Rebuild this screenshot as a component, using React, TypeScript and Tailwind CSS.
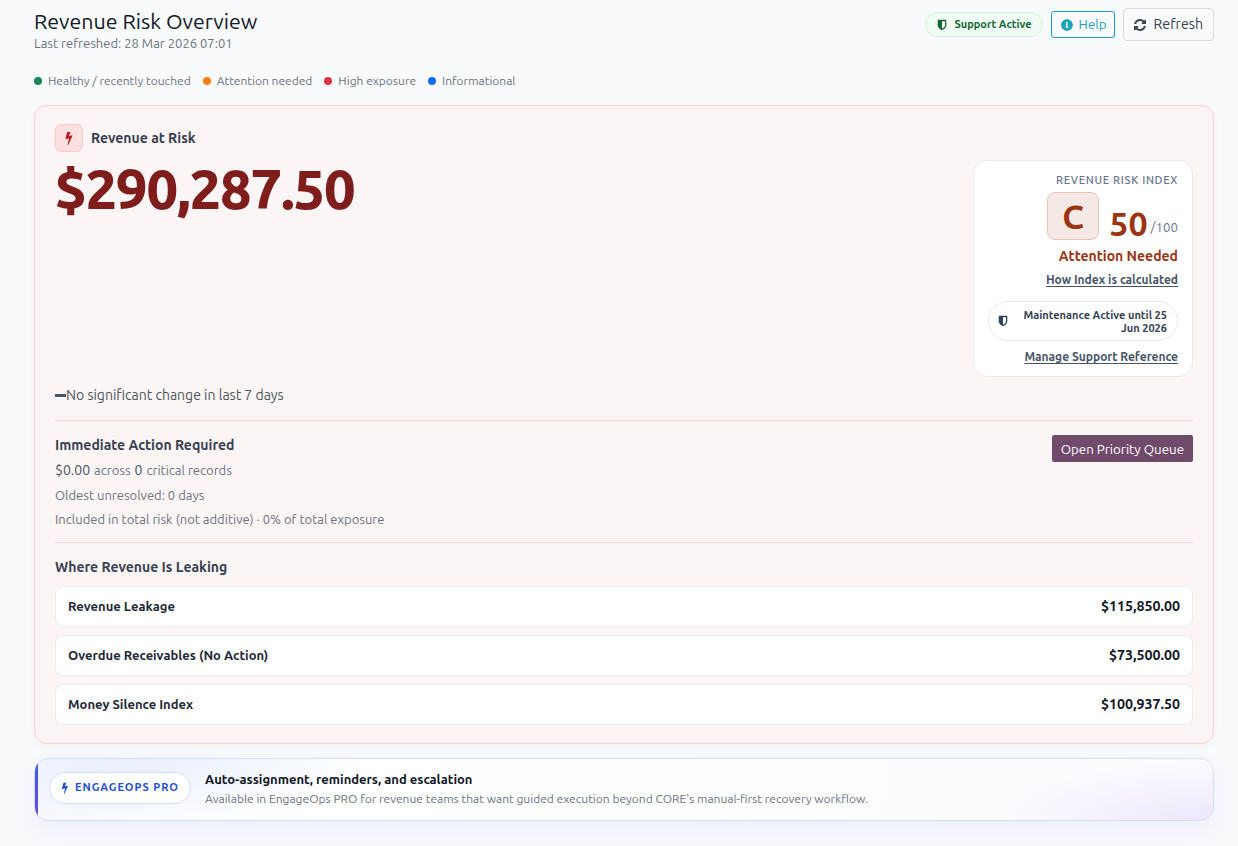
import { FaInfoCircle } from "react-icons/fa"

const legend = [
  { label: "Healthy / recently touched", dot: "bg-[#198754]" },
  { label: "Attention needed", dot: "bg-[#fd7e14]" },
  { label: "High exposure", dot: "bg-[#dc3545]" },
  { label: "Informational", dot: "bg-[#0d6efd]" },
]

const leaks = [
  { label: "Revenue Leakage", amount: "$115,850.00" },
  { label: "Overdue Receivables (No Action)", amount: "$73,500.00" },
  { label: "Money Silence Index", amount: "$100,937.50" },
]

function BoltIcon({ className }: { className: string }) {
  return (
    <svg viewBox="0 0 1792 1792" fill="currentColor" className={className}>
      <path d="M1333 566q18 20 7 44l-540 1157q-13 25-42 25-4 0-14-2-17-5-25.500-19t-4.500-30l197-808-406 101q-4 1-12 1-18 0-31-11-18-15-13-39l201-825q4-14 16-23t28-9h328q19 0 32 12.500t13 29.500q0 8-5 18l-171 463 396-98q8-2 12-2 19 0 34 15z" />
    </svg>
  )
}

function ShieldIcon({ className }: { className: string }) {
  return (
    <svg viewBox="0 0 1792 1792" fill="currentColor" className={className}>
      <path d="M1344 960v-640h-448v1137q119-63 213-137 235-184 235-360zm192-768v768q0 86-33.500 170.500t-83 150-118 127.500-126.500 103-121 77.500-89.500 49.500-42.500 20q-12 6-26 6t-26-6q-16-7-42.500-20t-89.500-49.500-121-77.500-126.500-103-118-127.500-83-150-33.500-170.500v-768q0-26 19-45t45-19h1152q26 0 45 19t19 45z" />
    </svg>
  )
}

function RefreshIcon({ className }: { className: string }) {
  return (
    <svg viewBox="0 0 1792 1792" fill="currentColor" className={className}>
      <path d="M1639 1056q0 5-1 7-64 268-268 434.500t-478 166.500q-146 0-282.500-55t-243.500-157l-129 129q-19 19-45 19t-45-19-19-45v-448q0-26 19-45t45-19h448q26 0 45 19t19 45-19 45l-137 137q71 66 161 102t187 36q134 0 250-65t186-179q11-17 53-117 8-23 30-23h192q13 0 22.500 9.500t9.500 22.500zm25-800v448q0 26-19 45t-45 19h-448q-26 0-45-19t-19-45 19-45l138-138q-148-137-349-137-134 0-250 65t-186 179q-11 17-53 117-8 23-30 23h-199q-13 0-22.500-9.500t-9.500-22.500v-7q65-268 270-434.500t480-166.500q146 0 284 55.500t245 156.500l130-129q19-19 45-19t45 19 19 45z" />
    </svg>
  )
}

function RiskIndexCard() {
  return (
    <div className="flex h-[217px] w-[220px] shrink-0 flex-col items-end rounded-[14px] border border-[#e9e9ee] bg-white px-[14px] pt-[12px] text-right">
      <div className="text-[11px] font-medium leading-[14px] tracking-[0.7px] text-[#64748b]">REVENUE RISK INDEX</div>
      <div className="mt-[5px] flex items-end">
        <div className="flex h-[48px] w-[52px] items-center justify-center rounded-[8px] border border-[#e8c4b8] bg-[#f5e9e6] text-[34px] font-bold text-[#9a3412]">C</div>
        <div className="ml-[10px] text-[34px] font-bold leading-[34px] text-[#9a3412]">50</div>
        <div className="mb-[2px] ml-[3px] text-[13.3px] leading-[20px] text-[#64748b]">/100</div>
      </div>
      <div className="mt-[6px] text-[14px] font-bold leading-[20px] text-[#9a3412]">Attention Needed</div>
      <a className="mt-[6px] text-[12px] font-bold leading-[16px] text-[#475569] underline underline-offset-2">How Index is calculated</a>
      <div className="mt-[13px] flex h-[40px] w-[190px] items-center justify-between rounded-full border border-[#e9e9ee] bg-white pl-[8px] pr-[10px]">
        <ShieldIcon className="h-[12px] w-[12px] text-[#334155]" />
        <div className="w-[150px] pt-[1px] text-[11px] font-bold leading-[13px] text-[#334155]">Maintenance Active until 25 Jun 2026</div>
      </div>
      <a className="mt-[8px] text-[12px] font-bold leading-[16px] text-[#475569] underline underline-offset-2">Manage Support Reference</a>
    </div>
  )
}

export default function App() {
  return (
    <div className="min-h-[846px] bg-[#f9fafc] pb-[25px] pl-[34px] pr-[24px] pt-[8px] font-['Ubuntu','Noto_Sans',sans-serif]">
      <div className="flex items-start justify-between">
        <div>
          <h1 className="text-[21.4px] font-normal leading-[26px] text-[#111827]">Revenue Risk Overview</h1>
          <div className="mt-[1px] text-[13px] leading-[16px] text-[#6b7280]">Last refreshed: 28 Mar 2026 07:01</div>
        </div>
        <div className="flex items-center">
          <div className="flex h-[25px] items-center gap-[6px] rounded-full border border-[#d1f0dc] bg-[#f0fdf4] pl-[10px] pr-[10px] text-[11px] font-bold text-[#166534]">
            <ShieldIcon className="h-[12px] w-[12px]" />
            Support Active
          </div>
          <button className="ml-[8px] flex h-[27px] items-center gap-[6px] rounded-[3px] border border-[#17a2b8] pl-[9px] pr-[8px] pt-[1px] text-[13.3px] text-[#17a2b8]">
            <FaInfoCircle className="h-[12px] w-[12px]" />
            Help
          </button>
          <button className="ml-[8px] flex h-[33px] items-center gap-[6px] rounded-[4px] border border-[#d8dae0] pl-[9px] pr-[10px] pt-[1px] text-[14.2px] text-[#374151]">
            <RefreshIcon className="h-[14px] w-[14px]" />
            Refresh
          </button>
        </div>
      </div>

      <div className="mt-[22px] flex items-center gap-[12px] text-[12px] leading-[16px] text-[#6b7280]">
        {legend.map((item) => (
          <div key={item.label} className="flex items-center gap-[6px]">
            <span className={`mb-[1px] h-[8px] w-[8px] rounded-full ${item.dot}`} />
            {item.label}
          </div>
        ))}
      </div>

      <div className="mt-[16px] rounded-[12px] border border-[#fbd0d0] bg-[#fcf5f5] px-[20px] pb-[18px] pt-[18px] shadow-[0_2px_8px_rgba(0,0,0,0.03)]">
        <div className="flex items-center gap-[8px]">
          <div className="flex h-[28px] w-[28px] items-center justify-center rounded-[6px] border border-[#fbc9c9] bg-[#fce0e0]">
            <BoltIcon className="h-[14px] w-[14px] text-[#b91c1c]" />
          </div>
          <div className="text-[14px] font-bold text-[#374151]">Revenue at Risk</div>
        </div>

        <div className="flex items-start justify-between">
          <div className="mt-[5px] text-[56px] font-extrabold leading-[64px] tracking-[-1.12px] text-[#7f1d1d]">$290,287.50</div>
          <div className="mt-[8px]">
            <RiskIndexCard />
          </div>
        </div>

        <div className="mt-[8px] flex items-center text-[14px] leading-[20px] text-[#4b5563]">
          <span className="h-[3px] w-[11px] bg-[#475569]" />
          No significant change in last 7 days
        </div>

        <div className="mt-[15px] flex items-start justify-between border-t border-[#fbd5d5] pb-[15px] pt-[14px]">
          <div>
            <div className="text-[14px] font-bold leading-[20px] text-[#374151]">Immediate Action Required</div>
            <div className="mt-[6px] flex items-baseline gap-[4px] text-[13px] leading-[18px] text-[#6b7280]">
              <span className="text-[14px] text-[#4b5563]">$0.00</span> across <span className="text-[14px] text-[#4b5563]">0</span> critical records
            </div>
            <div className="mt-[8px] text-[13px] leading-[16px] text-[#6b7280]">Oldest unresolved: 0 days</div>
            <div className="mt-[8px] text-[13px] leading-[16px] text-[#6b7280]">Included in total risk (not additive) · 0% of total exposure</div>
          </div>
          <button className="h-[27px] rounded-[2px] bg-[#6f4a6b] px-[9px] pt-[3px] text-[13.3px] text-white">Open Priority Queue</button>
        </div>

        <div className="border-t border-[#fbd5d5] pt-[14px]">
          <div className="text-[14px] font-bold leading-[20px] text-[#374151]">Where Revenue Is Leaking</div>
          <div className="mt-[9px] flex flex-col gap-[8px]">
            {leaks.map((row) => (
              <div key={row.label} className="flex h-[41px] items-center justify-between rounded-[8px] border border-[#eeeef2] bg-white px-[12px]">
                <span className="text-[13px] font-bold text-[#1f2937]">{row.label}</span>
                <span className="text-[14.2px] font-bold text-[#111827]">{row.amount}</span>
              </div>
            ))}
          </div>
        </div>
      </div>

      <div className="relative mt-[14px] flex h-[63px] items-center overflow-hidden rounded-[14px] border border-[#d3defc] bg-[radial-gradient(ellipse_220px_60px_at_100%_100%,#ede7fb_0%,rgba(255,255,255,0)_100%),radial-gradient(ellipse_240px_60px_at_8%_0%,#eaeffd_0%,rgba(255,255,255,0)_100%),linear-gradient(100deg,#f6f8fe_0%,#ffffff_25%,#fbfbfe_100%)] pb-[4px] pl-[14px] shadow-[0_10px_24px_rgba(79,100,229,0.07)]">
        <span className="absolute bottom-0 left-0 top-0 w-[3px] bg-[linear-gradient(180deg,#3b5bdb,#7048e8)]" />
        <div className="flex h-[32px] w-[142px] items-center gap-[4px] rounded-full border border-[#d3defc] bg-white pl-[9px] text-[11px] font-bold tracking-[1px] text-[#1d4ed8]">
          <BoltIcon className="h-[12px] w-[12px]" />
          ENGAGEOPS PRO
        </div>
        <div className="ml-[14px] pt-[2px]">
          <div className="text-[13px] font-bold leading-[18px] text-[#111827]">Auto-assignment, reminders, and escalation</div>
          <div className="mt-[3px] text-[12px] leading-[16px] text-[#6b7280]">Available in EngageOps PRO for revenue teams that want guided execution beyond CORE's manual-first recovery workflow.</div>
        </div>
      </div>
    </div>
  )
}
